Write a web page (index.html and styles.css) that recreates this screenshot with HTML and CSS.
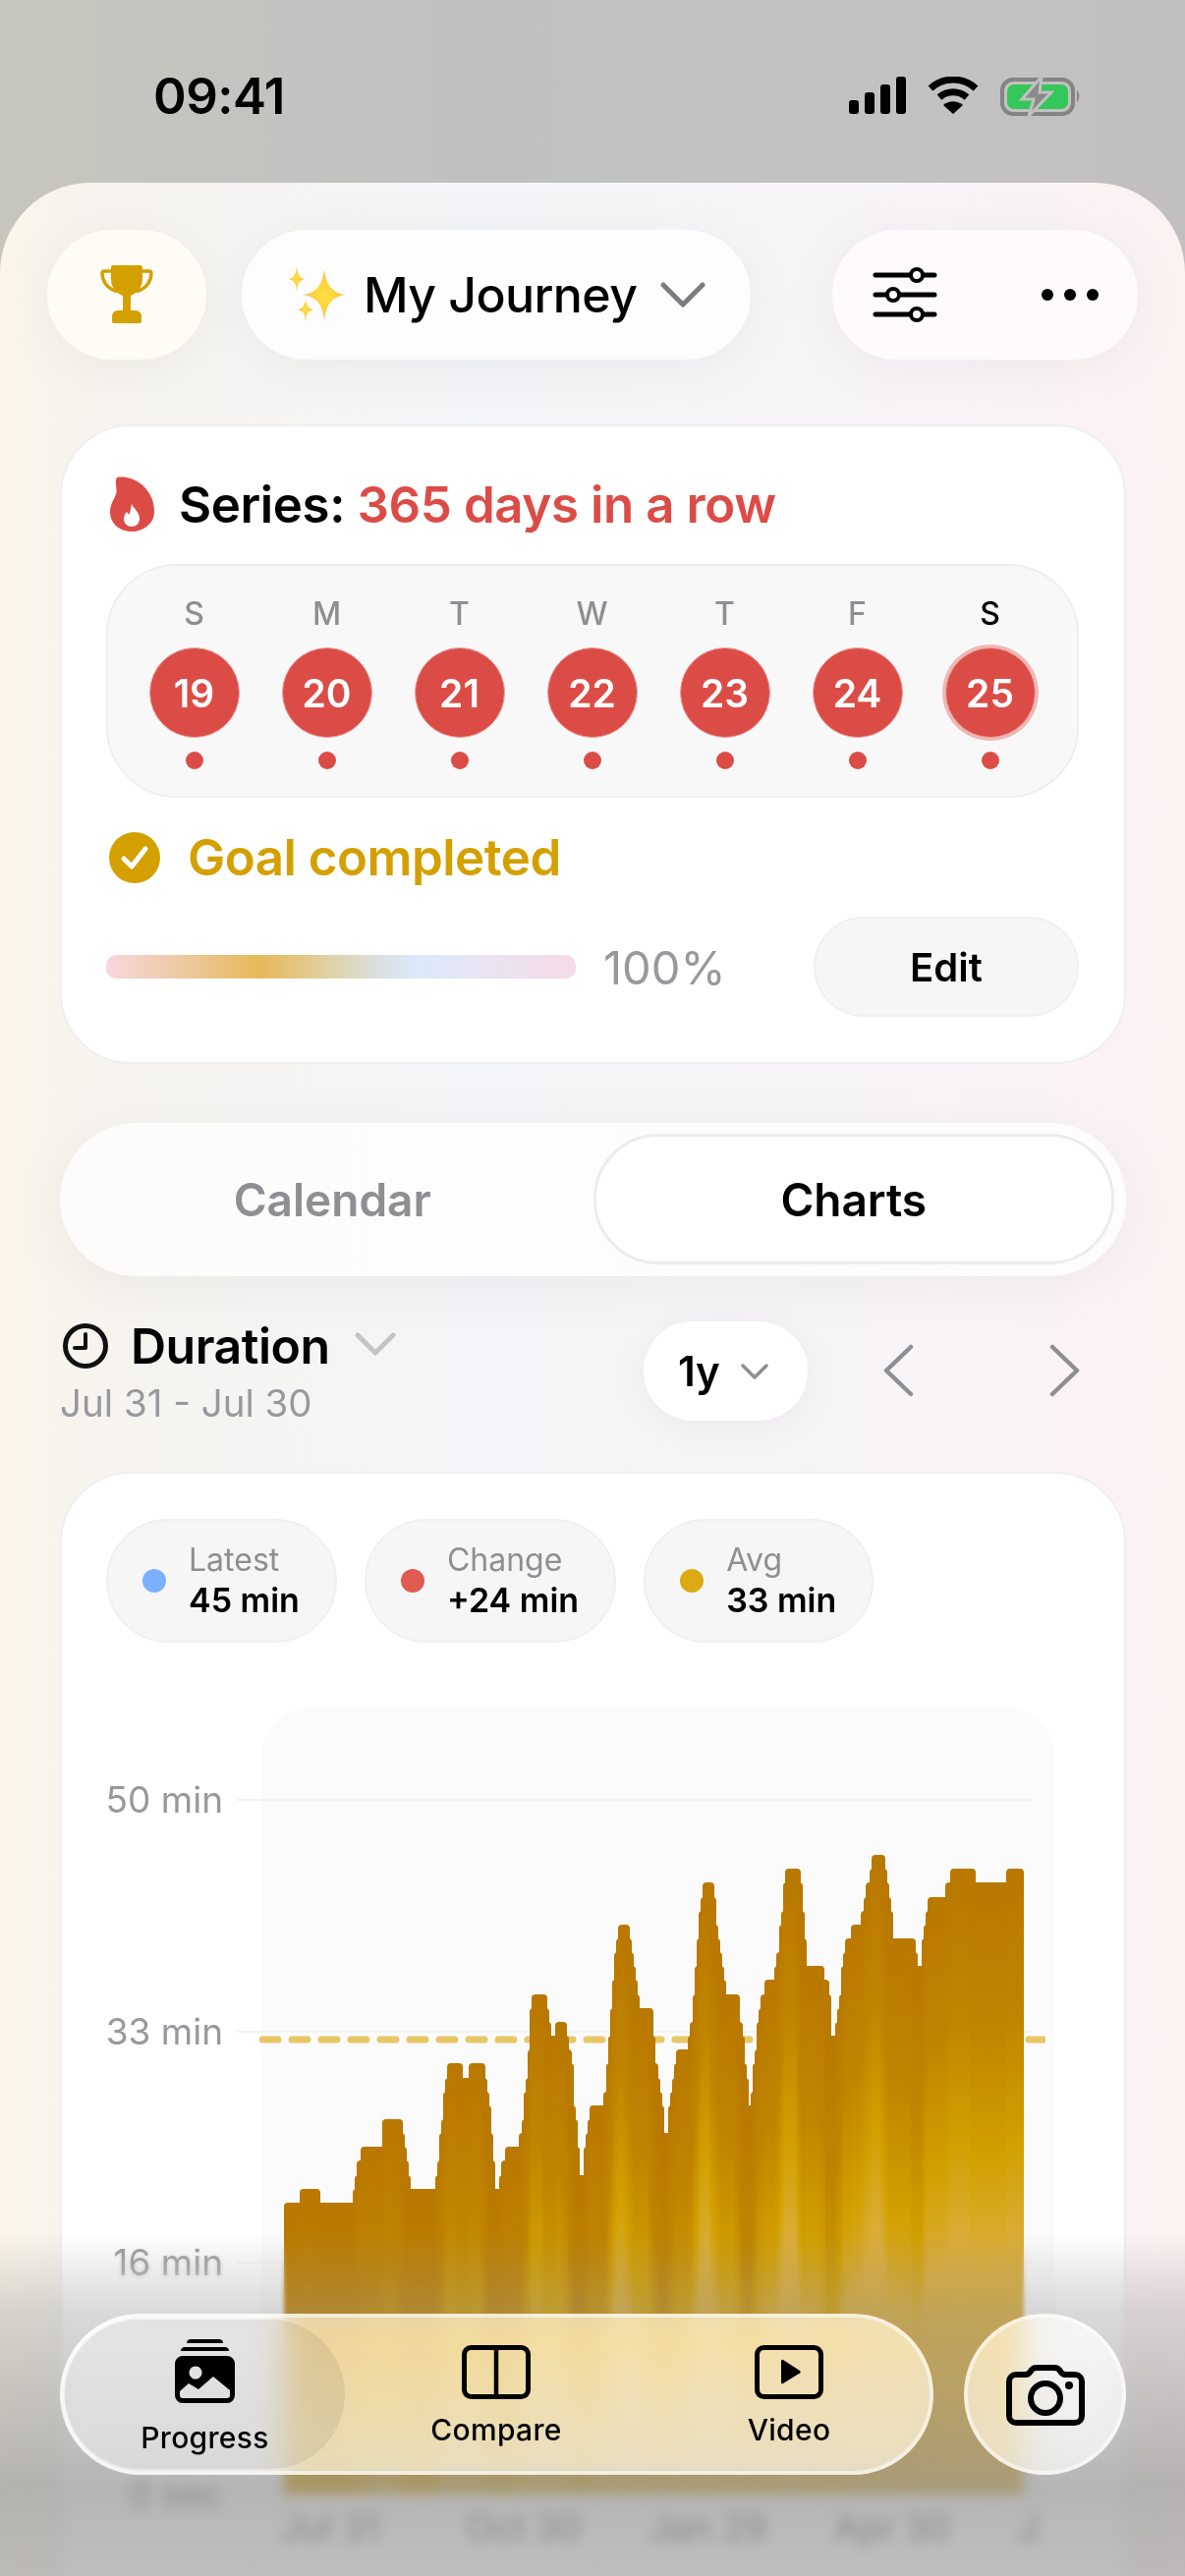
FILE: index.html
```html
<!DOCTYPE html>
<html lang="en">
<head>
  <meta charset="UTF-8">
  <title>My Journey</title>
  <link rel="stylesheet" href="styles.css">
</head>
<body>
  <div class="status-bar">
    <span class="status-time">09:41</span>
    <div class="status-icons">
      <svg width="58" height="38" viewBox="0 0 58 38">
        <rect x="0" y="24" width="10" height="14" rx="3"/>
        <rect x="16" y="16" width="10" height="22" rx="3"/>
        <rect x="32" y="8" width="10" height="30" rx="3"/>
        <rect x="48" y="0" width="10" height="38" rx="3"/>
      </svg>
      <svg width="52" height="38" viewBox="0 0 52 38">
        <path d="M3 12 C16 0 36 0 49 12" fill="none" stroke="#000" stroke-width="7"/>
        <path d="M12 21 C20 14 32 14 40 21" fill="none" stroke="#000" stroke-width="7"/>
        <path d="M16 29 C22 24 30 24 36 29 L26 38 Z"/>
      </svg>
      <svg width="82" height="40" viewBox="0 0 82 40">
        <rect x="2" y="3" width="72" height="35" rx="11" fill="none" stroke="#848484" stroke-width="4"/>
        <rect x="7" y="8" width="62" height="25" rx="7" fill="#34c759"/>
        <path d="M78 14 C81 16 81 24 78 26 Z" fill="#848484"/>
        <path d="M42 0 L22 23 H34 L29 40 L52 16 H40 Z" fill="#8a8a8a" stroke="#c1c0c1" stroke-width="3"/>
      </svg>
    </div>
  </div>

  <div class="sheet">
    <div class="topbar">
      <button class="trophy-btn">
        <svg width="54" height="60" viewBox="0 0 54 60">
          <path d="M13 0 H41 a2 2 0 0 1 2 2 V14 C43 24 36 29 31 31 V46 H36 a6 6 0 0 1 6 6 V57 a2 2 0 0 1 -2 2 H14 a2 2 0 0 1 -2 -2 V52 a6 6 0 0 1 6 -6 H23 V31 C18 29 11 24 11 14 V2 a2 2 0 0 1 2 -2 Z" fill="#d4a000"/>
          <path d="M12 6 H4 C1 6 2 10 3 14 C5 21 10 24 17 27 M42 6 H50 C53 6 52 10 51 14 C49 21 44 24 37 27" fill="none" stroke="#d4a000" stroke-width="3.5"/>
        </svg>
      </button>
      <button class="journey-btn">
        <svg class="sparkles" width="62" height="58" viewBox="0 0 62 58">
          <defs>
            <radialGradient id="spark">
              <stop offset="0" stop-color="#ffe04a"/>
              <stop offset="0.5" stop-color="#ffd23a"/>
              <stop offset="1" stop-color="#ffb45a"/>
            </radialGradient>
          </defs>
          <path d="M38 2 Q39.500 27 60 29 Q39.500 31 38 56 Q36.500 31 16 29 Q36.500 27 38 2 Z" fill="url(#spark)"/>
          <path d="M10 0 Q10.500 12 18 13 Q10.500 14 10 26 Q9.500 14 2 13 Q9.500 12 10 0 Z" fill="url(#spark)"/>
          <path d="M19 33 Q19.500 43 27 44 Q19.500 45 19 56 Q18.500 45 11 44 Q18.500 43 19 33 Z" fill="url(#spark)"/>
        </svg>
        <span class="journey-label">My Journey</span>
        <svg width="46" height="26" viewBox="0 0 46 26"><path d="M3 3 L23 23 L43 3" fill="none" stroke="#7c7c80" stroke-width="5" stroke-linecap="round" stroke-linejoin="round"/></svg>
      </button>
      <div class="actions-pill">
        <svg width="66" height="56" viewBox="0 0 66 56">
          <g stroke="#000" stroke-width="5" stroke-linecap="round">
            <path d="M3 8 H63 M3 28 H63 M3 48 H63"/>
          </g>
          <g fill="#fff" stroke="#000" stroke-width="4">
            <circle cx="45" cy="8" r="6"/>
            <circle cx="21" cy="28" r="6"/>
            <circle cx="45" cy="48" r="6"/>
          </g>
        </svg>
        <svg width="60" height="14" viewBox="0 0 60 14">
          <circle cx="7" cy="7" r="6"/>
          <circle cx="30" cy="7" r="6"/>
          <circle cx="53" cy="7" r="6"/>
        </svg>
      </div>
    </div>

    <div class="content">
      <section class="card series-card">
        <div class="series-title">
          <svg width="45" height="56" viewBox="0 0 45 56">
            <path d="M7 1 C24 -2 45 12 45 36 C45 48 34 56 22 56 C9 56 0 47 0 36 C0 28 4 24 6 18 C8 12 4 6 7 1 Z" fill="#dc4c46"/>
            <path d="M22 28 C24 33 30 36 30 43 C30 48 26 51 22 51 C18 51 14 48 14 43 C14 40 16 37 17 36 C18 38 19 38 20 38 C21 35 21 31 22 28 Z" fill="#fff"/>
          </svg>
          <span>Series: <em>365 days in a row</em></span>
        </div>

        <div class="week">
          <div class="day"><span class="day-name">S</span><span class="day-num">19</span><i class="day-dot"></i></div>
          <div class="day"><span class="day-name">M</span><span class="day-num">20</span><i class="day-dot"></i></div>
          <div class="day"><span class="day-name">T</span><span class="day-num">21</span><i class="day-dot"></i></div>
          <div class="day"><span class="day-name">W</span><span class="day-num">22</span><i class="day-dot"></i></div>
          <div class="day"><span class="day-name">T</span><span class="day-num">23</span><i class="day-dot"></i></div>
          <div class="day"><span class="day-name">F</span><span class="day-num">24</span><i class="day-dot"></i></div>
          <div class="day today"><span class="day-name">S</span><span class="day-num">25</span><i class="day-dot"></i></div>
        </div>

        <div class="goal">
          <svg width="52" height="52" viewBox="0 0 52 52">
            <circle cx="26" cy="26" r="26" fill="#d4a000"/>
            <path d="M15 27 L23 35 L37 17" fill="none" stroke="#fff" stroke-width="5" stroke-linecap="round" stroke-linejoin="round"/>
          </svg>
          <span>Goal completed</span>
        </div>

        <div class="goal-progress">
          <div class="progress-bar"></div>
          <span class="progress-value">100%</span>
          <button class="edit-btn">Edit</button>
        </div>
      </section>

      <div class="segmented">
        <div class="segment">Calendar</div>
        <div class="segment active">Charts</div>
      </div>

      <div class="metric-head">
        <div class="metric-info">
          <div class="metric-title">
            <svg width="46" height="46" viewBox="0 0 46 46">
              <circle cx="23" cy="23" r="20.500" fill="none" stroke="#111" stroke-width="5"/>
              <path d="M23 11 V25 H12" fill="none" stroke="#111" stroke-width="4" stroke-linecap="round" stroke-linejoin="round"/>
            </svg>
            <span>Duration</span>
            <svg class="metric-chevron" width="42" height="25" viewBox="0 0 42 25"><path d="M3 3 L21 21 L39 3" fill="none" stroke="#c4c4c6" stroke-width="5" stroke-linecap="round" stroke-linejoin="round"/></svg>
          </div>
          <div class="metric-range">Jul 31 - Jul 30</div>
        </div>
        <button class="range-btn">
          <span>1y</span>
          <svg width="30" height="18" viewBox="0 0 30 18"><path d="M3 3 L15 15 L27 3" fill="none" stroke="#8e8e93" stroke-width="3.500" stroke-linecap="round" stroke-linejoin="round"/></svg>
        </button>
        <svg class="nav-prev" width="32" height="54" viewBox="0 0 32 54"><path d="M29 3 L4 27 L29 51" fill="none" stroke="#8e8e93" stroke-width="4.500" stroke-linecap="round" stroke-linejoin="round"/></svg>
        <svg class="nav-next" width="32" height="54" viewBox="0 0 32 54"><path d="M3 3 L28 27 L3 51" fill="none" stroke="#8e8e93" stroke-width="4.500" stroke-linecap="round" stroke-linejoin="round"/></svg>
      </div>

      <section class="card chart-card">
        <div class="chips">
          <div class="chip"><i class="chip-dot latest"></i><div><div class="chip-label">Latest</div><div class="chip-value">45 min</div></div></div>
          <div class="chip"><i class="chip-dot change"></i><div><div class="chip-label">Change</div><div class="chip-value">+24 min</div></div></div>
          <div class="chip"><i class="chip-dot avg"></i><div><div class="chip-label">Avg</div><div class="chip-value">33 min</div></div></div>
        </div>

        <div class="chart">
          <div class="y-axis">
            <span>50 min</span>
            <span>33 min</span>
            <span>16 min</span>
            <span>0 sec</span>
          </div>
          <div class="plot">
            <i class="grid-line line-50"></i>
            <i class="grid-line line-33"></i>
            <i class="grid-line line-16"></i>
            <i class="grid-line line-0"></i>
            <svg class="avg-line" width="800" height="8" viewBox="0 0 800 8"><path d="M3 4 H798" stroke="#e8c766" stroke-width="7" stroke-dasharray="16 14" stroke-linecap="round"/></svg>
            <div class="bars" id="bars"></div>
            <div class="x-axis">
              <span>Jul 31</span>
              <span>Oct 30</span>
              <span>Jan 29</span>
              <span>Apr 30</span>
              <span>J</span>
            </div>
          </div>
        </div>
      </section>
    </div>
  </div>

  <div class="fade fade-soft"></div>
  <div class="fade fade-strong"></div>
  <div class="fade-tint"></div>

  <div class="bottom-bar">
    <nav class="tabs">
      <div class="tab active">
        <svg width="62" height="65" viewBox="0 0 62 65">
          <path d="M12 4 C12 1 14 0 16 0 H45 C47 0 49 1 49 4 Z"/>
          <path d="M6 12 C6 9 8 8 10 8 H51 C53 8 55 9 55 12 Z"/>
          <path fill-rule="evenodd" d="M8 17 H53 a8 8 0 0 1 8 8 V57 a8 8 0 0 1 -8 8 H8 a8 8 0 0 1 -8 -8 V25 a8 8 0 0 1 8 -8 Z M21 27.500 a6.500 6.500 0 1 0 0.010 0 Z M5 53 L14 45 L24 51 L39 38 L56 52 V57 a3 3 0 0 1 -3 3 H8 a3 3 0 0 1 -3 -3 Z"/>
        </svg>
        <span>Progress</span>
      </div>
      <div class="tab">
        <svg width="70" height="55" viewBox="0 0 70 55">
          <rect x="2.500" y="2.500" width="65" height="50" rx="7" fill="none" stroke="#000" stroke-width="5"/>
          <path d="M35 2 V53" stroke="#000" stroke-width="4.500"/>
        </svg>
        <span>Compare</span>
      </div>
      <div class="tab">
        <svg width="70" height="55" viewBox="0 0 70 55">
          <rect x="2.500" y="2.500" width="65" height="50" rx="7" fill="none" stroke="#000" stroke-width="5"/>
          <path d="M27 16 a1.500 1.500 0 0 1 2 -1 L46 26 a1.500 1.500 0 0 1 0 2.500 L29 39 a1.500 1.500 0 0 1 -2 -1 Z"/>
        </svg>
        <span>Video</span>
      </div>
    </nav>
    <button class="camera-btn">
      <svg width="80" height="62" viewBox="0 0 80 62">
        <path d="M10 10 H20 C23 10 24 8 26 5 C28 3 29 3 33 3 H47 C51 3 52 3 54 5 C56 8 57 10 60 10 H70 a7 7 0 0 1 7 7 V52 a7 7 0 0 1 -7 7 H10 a7 7 0 0 1 -7 -7 V17 a7 7 0 0 1 7 -7 Z" fill="none" stroke="#000" stroke-width="6"/>
        <circle cx="40" cy="34" r="15" fill="none" stroke="#000" stroke-width="6"/>
        <circle cx="64" cy="21" r="4"/>
      </svg>
    </button>
  </div>

  <script src="chart.js"></script>
</body>
</html>
```

FILE: styles.css
```css
* {
  box-sizing: border-box;
}

body {
  margin: 0;
  width: 1206px;
  height: 2622px;
  overflow: hidden;
  position: relative;
  font-family: Inter, "Liberation Sans", sans-serif;
  color: #000;
  background: linear-gradient(90deg, #c7c6be 0%, #bfc1c1 40%, #c3c1c2 80%, #c1bfc0 100%);
}

button {
  font: inherit;
  color: inherit;
  border: none;
  cursor: pointer;
}

svg {
  display: block;
  flex: none;
}

/* status bar */
.status-bar {
  height: 186px;
  display: flex;
  justify-content: space-between;
  padding: 78px 106px 0 156px;
}

.status-time {
  font-size: 51px;
  font-weight: 600;
  line-height: 40px;
  letter-spacing: -0.5px;
}

.status-icons {
  display: flex;
  gap: 22px;
  align-items: flex-start;
}

/* sheet */
.sheet {
  height: 2436px;
  padding-top: 48px;
  border-radius: 92px 92px 0 0;
  overflow: hidden;
  background: linear-gradient(90deg, #fcf6e9 0%, #f7f4ee 6%, #f4f5f8 40%, #f8f4f7 80%, #fdf2f2 100%);
}

.topbar {
  display: flex;
  padding: 0 48px;
  height: 132px;
  margin-bottom: 66px;
}

.trophy-btn,
.journey-btn,
.actions-pill {
  height: 132px;
  border-radius: 66px;
  box-shadow: 0 8px 60px rgba(0, 0, 0, 0.05);
}

.trophy-btn {
  width: 162px;
  margin-right: 36px;
  display: flex;
  align-items: center;
  justify-content: center;
  background: #fffcf5;
}

.journey-btn {
  width: 518px;
  display: flex;
  align-items: center;
  padding-left: 46px;
  background: #fdfdfe;
}

.journey-label {
  font-size: 50px;
  font-weight: 500;
  margin-left: 16px;
  margin-right: 24px;
  letter-spacing: -0.6px;
}

.actions-pill {
  width: 311px;
  margin-left: auto;
  display: flex;
  align-items: center;
  justify-content: space-between;
  padding: 0 39px 0 41px;
  background: #fffbfc;
}

.content {
  padding: 0 60px 0 61px;
}

.card {
  background: #fff;
  border: 2px solid #efefef;
  border-radius: 72px;
}

/* series card */
.series-card {
  height: 651px;
  padding: 49px 46px 0 45px;
}

.series-title {
  display: flex;
  align-items: center;
  gap: 25px;
  height: 60px;
  padding-left: 4px;
  font-size: 51px;
  font-weight: 600;
  letter-spacing: -0.4px;
}

.series-title em {
  font-style: normal;
  color: #dc4c46;
}

.week {
  margin-top: 31px;
  height: 238px;
  padding: 31px 20px 0;
  display: grid;
  grid-template-columns: repeat(7, 135px);
  background: #f8f8f9;
  border: 2px solid #efefef;
  border-radius: 72px;
}

.day {
  display: flex;
  flex-direction: column;
  align-items: center;
}

.day-name {
  font-size: 32px;
  line-height: 36px;
  font-weight: 500;
  color: #8e8e93;
}

.today .day-name {
  color: #000;
}

.day-num {
  margin-top: 16px;
  width: 92px;
  height: 92px;
  border-radius: 50%;
  display: flex;
  align-items: center;
  justify-content: center;
  font-size: 39px;
  font-weight: 600;
  color: #fff;
  background: #dc4c46;
  border: 1px solid #e9a5a2;
}

.today .day-num {
  box-shadow: 0 0 0 3px #edb9b6;
}

.day-dot {
  margin-top: 14px;
  width: 18px;
  height: 18px;
  border-radius: 50%;
  background: #dc4c46;
}

.goal {
  margin-top: 35px;
  display: flex;
  align-items: center;
  gap: 28px;
  padding-left: 3px;
  height: 52px;
  font-size: 51px;
  line-height: 52px;
  font-weight: 600;
  letter-spacing: -0.5px;
  color: #d4a000;
}

.goal-progress {
  margin-top: 34px;
  display: flex;
  align-items: center;
}

.progress-bar {
  width: 478px;
  height: 24px;
  border-radius: 10px;
  background: linear-gradient(90deg, #f7d7dd 0%, #ecc79a 18%, #e8b95a 33%, #e0d2a8 48%, #dadfe0 58%, #dae9fb 66%, #e8e4f3 80%, #f5dbe6 100%);
}

.progress-value {
  margin-left: 28px;
  font-size: 47px;
  color: #98989d;
}

.edit-btn {
  margin-left: auto;
  width: 270px;
  height: 102px;
  border-radius: 51px;
  font-size: 40px;
  font-weight: 600;
  background: #f6f6f6;
  border: 2px solid #f0f0f0;
}

/* segmented control */
.segmented {
  margin-top: 60px;
  height: 156px;
  padding: 11px 12px 12px;
  display: grid;
  grid-template-columns: 1fr 1fr;
  border-radius: 78px;
  background: rgba(255, 255, 255, 0.75);
  box-shadow: 0 10px 60px rgba(0, 0, 0, 0.05);
}

.segment {
  display: flex;
  align-items: center;
  justify-content: center;
  font-size: 46px;
  font-weight: 600;
  color: #8e8e93;
  border-radius: 66px;
}

.segment.active {
  color: #000;
  background: #fff;
  border: 3px solid #ececee;
}

/* metric header */
.metric-head {
  margin-top: 46px;
  display: flex;
  height: 106px;
}

.metric-info {
  width: 594px;
}

.metric-title {
  display: flex;
  align-items: center;
  height: 50px;
  padding-left: 3px;
  font-size: 50px;
  font-weight: 600;
  letter-spacing: -0.5px;
}

.metric-title span {
  margin-left: 23px;
}

.metric-chevron {
  margin-left: 25px;
  margin-top: -4px;
}

.metric-range {
  margin-top: 11px;
  font-size: 38.500px;
  line-height: 44px;
  color: #98989d;
}

.range-btn {
  width: 167px;
  height: 101px;
  border-radius: 50px;
  display: flex;
  align-items: center;
  padding-left: 35px;
  gap: 20px;
  font-size: 42px;
  font-weight: 600;
  background: #fff;
  box-shadow: 0 6px 40px rgba(0, 0, 0, 0.05);
}

.nav-prev {
  margin: 23px 0 0 76px;
}

.nav-next {
  margin: 23px 0 0 138px;
}

/* chart card */
.chart-card {
  margin-top: 47px;
  height: 1200px;
  padding: 46px 0 0 45px;
}

.chips {
  display: flex;
  gap: 28px;
}

.chip {
  height: 126px;
  padding: 0 36px 0 35px;
  display: flex;
  align-items: center;
  gap: 23px;
  background: #f6f6f7;
  border: 2px solid #f0f0f0;
  border-radius: 63px;
}

.chip-dot {
  width: 24px;
  height: 24px;
  border-radius: 50%;
}

.chip-dot.latest { background: #7cb0ff; }
.chip-dot.change { background: #e05a52; }
.chip-dot.avg { background: #dcaa12; }

.chip-label {
  font-size: 32px;
  line-height: 40px;
  color: #8e8e93;
}

.chip-value {
  font-size: 34px;
  line-height: 42px;
  font-weight: 600;
}

.chart {
  margin-top: 66px;
  display: flex;
}

.y-axis {
  width: 119px;
  padding-top: 74px;
  display: flex;
  flex-direction: column;
  gap: 195.500px;
  align-items: flex-end;
  font-size: 37px;
  line-height: 40px;
  color: #98989d;
  white-space: nowrap;
}

.y-axis span:last-child {
  color: #7f7f83;
}

.plot {
  position: relative;
  margin-left: 39px;
  width: 807px;
  height: 830px;
  background: #fbfbfb;
  border-radius: 50px;
}

.grid-line {
  position: absolute;
  left: -25px;
  width: 810px;
  height: 2px;
  background: #f3f3f3;
}

.line-50 { top: 93px; }
.line-33 { top: 329px; }
.line-16 { top: 564px; }
.line-0 { top: 800px; }

.avg-line {
  position: absolute;
  left: -2px;
  top: 334px;
}

.bars {
  position: absolute;
  left: 23px;
  top: 0;
  width: 751px;
  height: 801px;
  display: flex;
  align-items: flex-end;
}

.bar {
  flex: 0 0 8px;
  margin-right: -5.959px;
  border-radius: 4px 4px 0 0;
  background: linear-gradient(#b97800 0, #c08400 150px, #d2a000 280px, #dbad38 380px, #dcb040 600px);
}

.x-axis {
  position: absolute;
  left: 20px;
  top: 815px;
  display: grid;
  grid-template-columns: repeat(5, 187.500px);
  font-size: 37px;
  line-height: 40px;
  color: #7a7a7e;
  white-space: nowrap;
}

/* bottom fade */
.fade {
  position: absolute;
  left: 0;
  right: 0;
  bottom: 0;
}

.fade-soft {
  height: 340px;
  backdrop-filter: blur(2px);
  -webkit-mask-image: linear-gradient(transparent 0, #000 60px);
  mask-image: linear-gradient(transparent 0, #000 60px);
}

.fade-strong {
  height: 270px;
  backdrop-filter: blur(6px);
  -webkit-mask-image: linear-gradient(transparent 0, #000 90px);
  mask-image: linear-gradient(transparent 0, #000 90px);
}

.fade-tint {
  position: absolute;
  left: 0;
  right: 0;
  bottom: 0;
  height: 350px;
  background: linear-gradient(rgba(146, 146, 146, 0) 0, rgba(146, 146, 146, 0.34) 80px, rgba(146, 146, 146, 0.68) 260px, rgba(150, 150, 150, 0.62) 350px);
}

/* bottom bar */
.bottom-bar {
  position: absolute;
  left: 61px;
  top: 2355px;
  display: flex;
  gap: 31px;
}

.tabs,
.camera-btn {
  height: 164px;
  border: 4px solid rgba(255, 255, 255, 0.55);
  background: rgba(255, 255, 255, 0.62);
  backdrop-filter: blur(16px) saturate(1.7) brightness(1.08);
}

.tabs {
  width: 889px;
  border-radius: 82px;
  display: flex;
  padding: 2px 0 2px 1px;
}

.tab {
  flex: none;
  width: 298px;
  display: flex;
  flex-direction: column;
  align-items: center;
  justify-content: center;
  gap: 13px;
  padding-top: 3px;
  font-size: 30px;
  line-height: 36px;
  font-weight: 500;
  letter-spacing: 0.3px;
}

.tab.active {
  width: 285px;
  margin-right: 5px;
  gap: 17px;
  padding-top: 6px;
  border-radius: 76px;
  background: rgba(0, 0, 0, 0.07);
}

.camera-btn {
  width: 165px;
  border-radius: 50%;
  display: flex;
  align-items: center;
  justify-content: center;
  padding: 2px 0 0;
}
```

FILE: chart.js
```js
// daily duration for the last year, drawn as 365 overlapping bars
const outline = [
  [0, 21], [27, 21], [27, 22], [70, 22], [70, 21], [122, 21], [128, 22], [134, 24], [144, 25], [177, 25],
  [184, 27], [219, 27], [225, 26], [234, 23], [239, 22], [277, 22], [282, 24], [290, 27], [297, 30], [305, 31],
  [333, 31], [334, 30], [342, 30], [343, 31], [374, 31], [382, 28], [390, 25], [394, 22], [402, 24], [410, 25],
  [430, 25], [434, 26], [442, 28], [448, 31], [455, 35], [460, 36], [490, 36], [497, 33], [503, 34], [524, 34],
  [534, 32], [540, 28], [545, 26], [550, 23], [560, 27], [569, 28], [590, 28], [602, 34], [612, 40], [618, 41],
  [639, 41], [647, 39], [657, 36], [662, 35], [684, 35], [692, 31], [700, 29], [707, 26], [717, 30], [727, 32],
  [747, 32], [757, 36], [767, 42], [774, 44], [798, 44], [807, 40], [817, 37], [822, 36], [844, 36], [852, 33],
  [860, 30], [863, 28], [870, 32], [882, 36], [892, 37], [905, 37], [917, 41], [924, 44], [930, 45], [956, 45],
  [962, 43], [972, 38], [1000, 38], [1007, 37], [1012, 36], [1017, 33], [1022, 34], [1034, 39], [1042, 40], [1052, 41],
  [1066, 41], [1074, 43], [1082, 45], [1090, 46], [1110, 46], [1118, 45], [1124, 43], [1132, 40], [1166, 40], [1172, 39],
  [1176, 38], [1184, 41], [1194, 43], [1222, 43], [1232, 45], [1276, 45], [1287, 44], [1334, 44], [1334, 45], [1370, 45]
];

const barCount = 365;
const barWidth = 8;
const plotWidth = 751;
const minuteHeight = 14.15;
const outlineScale = plotWidth / 1370;

function outlineAt(x) {
  const pos = x / outlineScale;
  for (let i = 1; i < outline.length; i++) {
    const [x0, y0] = outline[i - 1];
    const [x1, y1] = outline[i];
    if (pos <= x1) {
      return x1 === x0 ? y1 : y0 + (y1 - y0) * (pos - x0) / (x1 - x0);
    }
  }
  return outline[outline.length - 1][1];
}

const bars = document.getElementById('bars');
const step = (plotWidth - barWidth) / (barCount - 1);

for (let i = 0; i < barCount; i++) {
  // a bar only reaches the lowest point of the outline under its full width
  const left = i * step;
  let value = Infinity;
  for (let x = left; x <= left + barWidth; x += 1) {
    value = Math.min(value, outlineAt(x));
  }
  const bar = document.createElement('div');
  bar.className = 'bar';
  bar.style.height = `${Math.round(value) * minuteHeight}px`;
  bars.appendChild(bar);
}
```
